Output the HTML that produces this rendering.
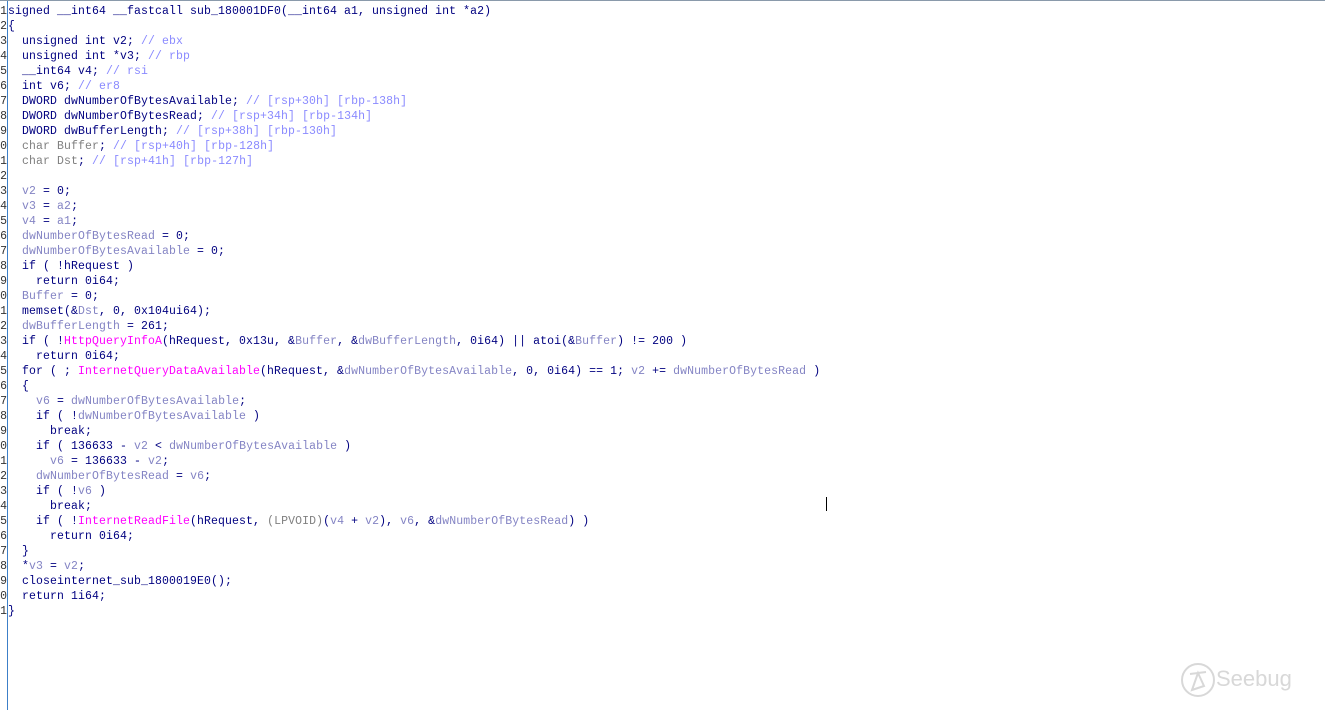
<!DOCTYPE html>
<html><head><style>
html,body{margin:0;padding:0;background:#fff;width:1326px;height:710px;overflow:hidden;position:relative}
#top{position:absolute;left:0;top:0;width:1325px;height:1px;background:#8a9aab}
#div{position:absolute;left:7px;top:1px;width:1px;height:709px;background:#3c7fc8}
#g,#c{position:absolute;top:4px;margin:0;font:11.5px/15px "Liberation Mono",monospace;white-space:pre}
#g{left:0;width:7px;overflow:hidden;color:#333;text-align:right;direction:rtl}
#c{left:8px;color:#000080;letter-spacing:0.1px}
.v{color:#8484c4}.m{color:#8a8aff}.f{color:#ff00ff}.gr{color:#808080}
#cur{position:absolute;left:826px;top:497px;width:1px;height:14px;background:#000}
#logo{position:absolute;left:1180px;top:662px;color:#d8d8d8;font:22px "Liberation Sans",sans-serif}
</style></head><body>
<div id="top"></div><div id="div"></div>
<pre id="g">1
2
3
4
5
6
7
8
9
0
1
2
3
4
5
6
7
8
9
0
1
2
3
4
5
6
7
8
9
0
1
2
3
4
5
6
7
8
9
0
1</pre>
<pre id="c">signed __int64 __fastcall sub_180001DF0(__int64 a1, unsigned int *a2)
{
  unsigned int v2; <span class="m">// ebx</span>
  unsigned int *v3; <span class="m">// rbp</span>
  __int64 v4; <span class="m">// rsi</span>
  int v6; <span class="m">// er8</span>
  DWORD dwNumberOfBytesAvailable; <span class="m">// [rsp+30h] [rbp-138h]</span>
  DWORD dwNumberOfBytesRead; <span class="m">// [rsp+34h] [rbp-134h]</span>
  DWORD dwBufferLength; <span class="m">// [rsp+38h] [rbp-130h]</span>
  <span class="gr">char Buffer</span>; <span class="m">// [rsp+40h] [rbp-128h]</span>
  <span class="gr">char Dst</span>; <span class="m">// [rsp+41h] [rbp-127h]</span>

  <span class="v">v2</span> = 0;
  <span class="v">v3</span> = <span class="v">a2</span>;
  <span class="v">v4</span> = <span class="v">a1</span>;
  <span class="v">dwNumberOfBytesRead</span> = 0;
  <span class="v">dwNumberOfBytesAvailable</span> = 0;
  if ( !hRequest )
    return 0i64;
  <span class="v">Buffer</span> = 0;
  memset(&amp;<span class="v">Dst</span>, 0, 0x104ui64);
  <span class="v">dwBufferLength</span> = 261;
  if ( !<span class="f">HttpQueryInfoA</span>(hRequest, 0x13u, &amp;<span class="v">Buffer</span>, &amp;<span class="v">dwBufferLength</span>, 0i64) || atoi(&amp;<span class="v">Buffer</span>) != 200 )
    return 0i64;
  for ( ; <span class="f">InternetQueryDataAvailable</span>(hRequest, &amp;<span class="v">dwNumberOfBytesAvailable</span>, 0, 0i64) == 1; <span class="v">v2</span> += <span class="v">dwNumberOfBytesRead</span> )
  {
    <span class="v">v6</span> = <span class="v">dwNumberOfBytesAvailable</span>;
    if ( !<span class="v">dwNumberOfBytesAvailable</span> )
      break;
    if ( 136633 - <span class="v">v2</span> &lt; <span class="v">dwNumberOfBytesAvailable</span> )
      <span class="v">v6</span> = 136633 - <span class="v">v2</span>;
    <span class="v">dwNumberOfBytesRead</span> = <span class="v">v6</span>;
    if ( !<span class="v">v6</span> )
      break;
    if ( !<span class="f">InternetReadFile</span>(hRequest, <span class="gr">(LPVOID)</span>(<span class="v">v4</span> + <span class="v">v2</span>), <span class="v">v6</span>, &amp;<span class="v">dwNumberOfBytesRead</span>) )
      return 0i64;
  }
  *<span class="v">v3</span> = <span class="v">v2</span>;
  closeinternet_sub_1800019E0();
  return 1i64;
}</pre>
<div id="cur"></div>
<div id="logo"><svg width="36" height="36" viewBox="0 0 36 36" style="vertical-align:middle"><circle cx="18" cy="18" r="16" fill="none" stroke="#d8d8d8" stroke-width="2"/><path d="M10 12 L26 10 M18 11 L12 28 L24 24 Z" fill="none" stroke="#d8d8d8" stroke-width="2"/></svg>Seebug</div>
</body></html>
